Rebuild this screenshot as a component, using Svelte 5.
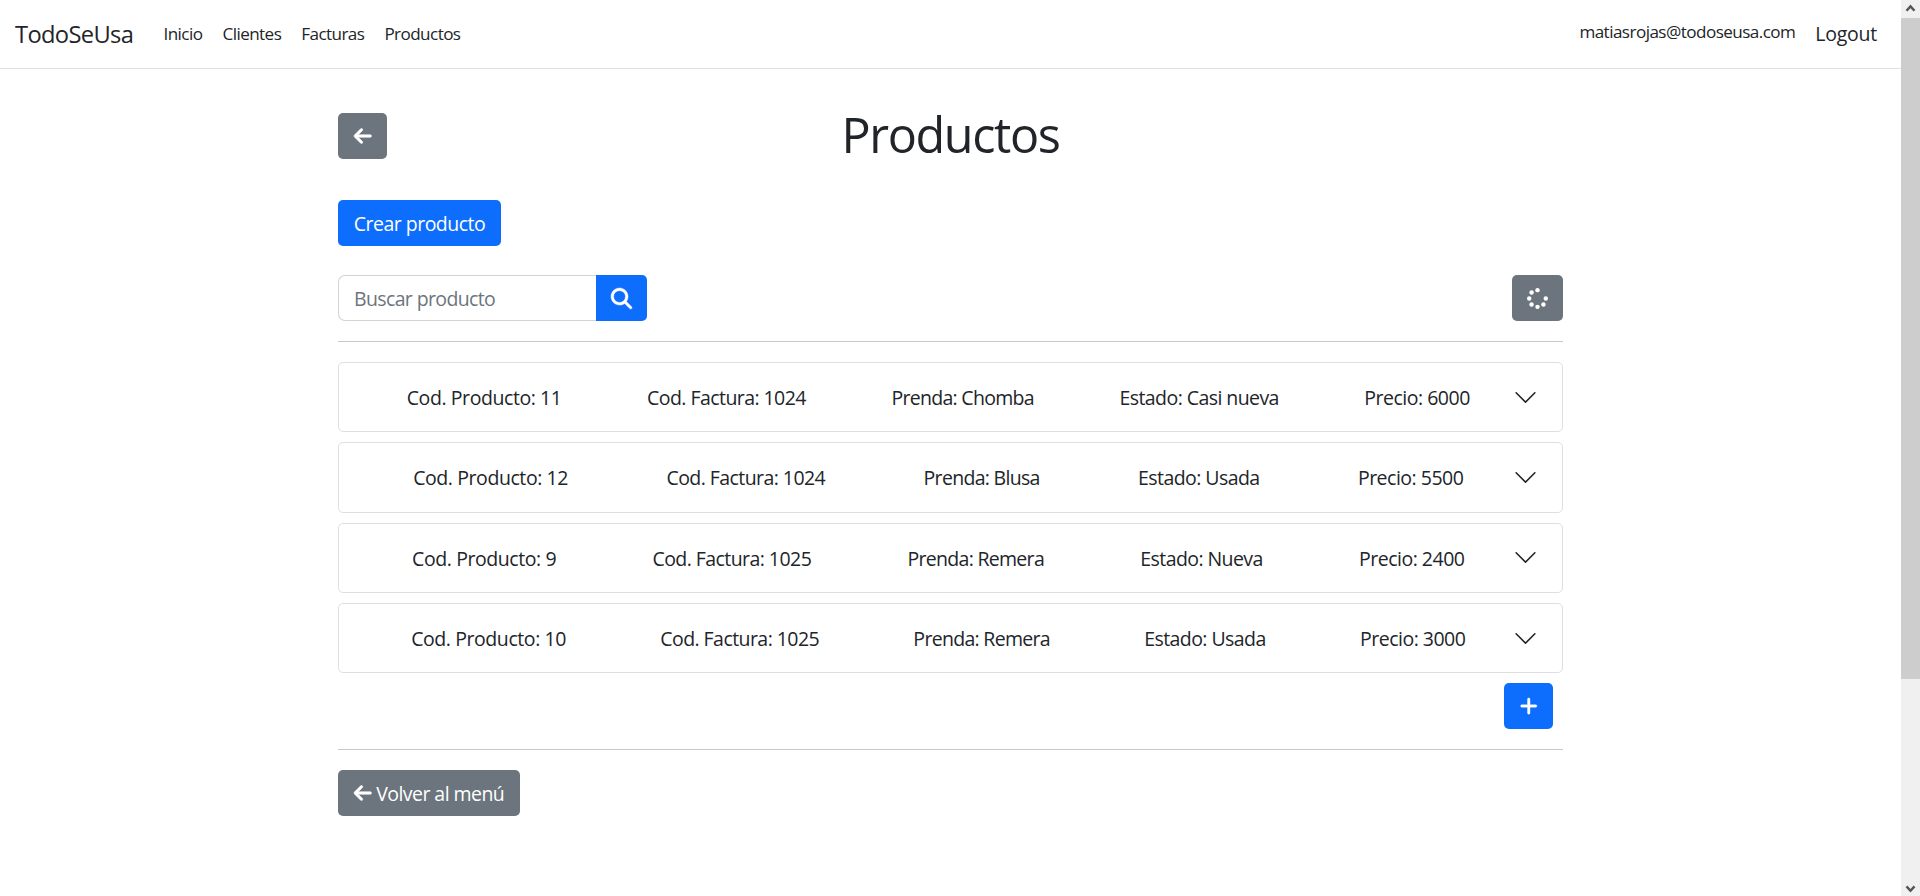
<script>
  const links = ['Inicio', 'Clientes', 'Facturas', 'Productos'];
  const products = [
    { code: 11, invoice: 1024, item: 'Chomba', state: 'Casi nueva', price: 6000 },
    { code: 12, invoice: 1024, item: 'Blusa', state: 'Usada', price: 5500 },
    { code: 9, invoice: 1025, item: 'Remera', state: 'Nueva', price: 2400 },
    { code: 10, invoice: 1025, item: 'Remera', state: 'Usada', price: 3000 }
  ];
</script>

{#snippet arrow()}
  <svg class="arrow" viewBox="0 0 448 512" fill="currentColor" stroke="currentColor" stroke-width="14"><path d="M9.4 233.4c-12.5 12.5-12.5 32.8 0 45.3l160 160c12.5 12.5 32.8 12.5 45.3 0s12.5-32.8 0-45.3L109.2 288 416 288c17.7 0 32-14.3 32-32s-14.3-32-32-32l-306.7 0L214.6 118.6c12.5-12.5 12.5-32.8 0-45.3s-32.8-12.5-45.3 0l-160 160z" /></svg>
{/snippet}

<div class="screen">
  <div class="page">
    <nav>
      <a class="brand" href="#top">TodoSeUsa</a>
      <div class="links">
        {#each links as link}<a href="#top">{link}</a>{/each}
      </div>
      <span class="email">matiasrojas@todoseusa.com</span>
      <a class="logout" href="#top">Logout</a>
    </nav>
    <main>
      <header>
        <button class="btn grey square" aria-label="Volver">{@render arrow()}</button>
        <h1>Productos</h1>
      </header>
      <button class="btn blue create"><span>Crear producto</span></button>
      <div class="tools">
        <div class="search">
          <input placeholder="Buscar producto" />
          <button class="btn blue find" aria-label="Buscar">
            <svg width="21" height="21" viewBox="0 0 512 512" fill="currentColor" stroke="currentColor" stroke-width="10"><path d="M416 208c0 45.9-14.9 88.3-40 122.7L502.6 457.4c12.5 12.5 12.5 32.8 0 45.3s-32.8 12.5-45.3 0L330.7 376c-34.4 25.2-76.8 40-122.7 40C93.1 416 0 322.9 0 208S93.1 0 208 0S416 93.1 416 208zM208 352a144 144 0 1 0 0-288 144 144 0 1 0 0 288z" /></svg>
          </button>
        </div>
        <button class="btn grey wide" aria-label="Recargar">
          <svg width="21" height="21" viewBox="0 0 512 512" fill="currentColor"><circle cx="256" cy="52" r="54" /><circle cx="256" cy="460" r="54" /><circle cx="54" cy="256" r="54" /><circle cx="458" cy="256" r="54" /><circle cx="111" cy="111" r="54" /><circle cx="111" cy="401" r="54" /><circle cx="401" cy="401" r="54" /></svg>
        </button>
      </div>
      <hr />
      <div class="list">
        {#each products as p}
          <div class="card">
            <div class="fields">
              <span class="prod">Cod. Producto: {p.code}</span>
              <span class="fact">Cod. Factura: {p.invoice}</span>
              <span class="item">Prenda: {p.item}</span>
              <span class="state">Estado: {p.state}</span>
              <span class="price">Precio: {p.price}</span>
            </div>
            <svg width="25" height="25" viewBox="0 0 16 16" fill="#212529"><path fill-rule="evenodd" d="M1.646 4.646a.5.5 0 0 1 .708 0L8 10.293l5.646-5.647a.5.5 0 0 1 .708.708l-6 6a.5.5 0 0 1-.708 0l-6-6a.5.5 0 0 1 0-.708z" /></svg>
          </div>
        {/each}
      </div>
      <div class="more">
        <button class="btn blue square" aria-label="Cargar más">
          <svg width="17.5" height="20" viewBox="0 0 448 512" fill="currentColor" stroke="currentColor" stroke-width="10"><path d="M256 80c0-17.7-14.3-32-32-32s-32 14.3-32 32V224H48c-17.7 0-32 14.3-32 32s14.3 32 32 32H192V432c0 17.7 14.3 32 32 32s32-14.3 32-32V288H400c17.7 0 32-14.3 32-32s-14.3-32-32-32H256V80z" /></svg>
        </button>
      </div>
      <hr />
      <button class="btn grey back">{@render arrow()}<span>Volver al menú</span></button>
    </main>
  </div>
  <div class="scrollbar">
    <svg width="19" height="18" viewBox="0 0 19 18" fill="none" stroke="#555" stroke-width="2.4"><path d="M5.5 10.8 9.5 6.4l4 4.4" /></svg>
    <div class="thumb"></div>
    <svg class="down" width="19" height="18" viewBox="0 0 19 18" fill="none" stroke="#555" stroke-width="2.4"><path d="M5.5 8.4 9.5 12.8l4-4.4" /></svg>
  </div>
</div>

<style>
  :global(body) { margin: 0; overflow: hidden; background: #fff; }
  * { box-sizing: border-box; }
  .screen {
    display: flex;
    height: 896px;
    color: #212529;
    font: 19.5px/30px "Open Sans", sans-serif;
  }
  .page { flex: 1; }
  a { color: inherit; text-decoration: none; }
  span { white-space: nowrap; }
  svg { overflow: visible; }
  nav {
    display: flex;
    align-items: center;
    height: 69px;
    padding: 0 24px 0 15px;
    border-bottom: 1px solid #dee2e6;
  }
  .brand { width: 148.5px; font-size: 23.7px; letter-spacing: -0.65px; }
  .links { display: flex; flex: 1; gap: 20px; font-size: 17.1px; letter-spacing: -0.57px; }
  .email { margin: 0 20px 4px 0; font-size: 17.1px; letter-spacing: -0.55px; }
  .logout { letter-spacing: -0.25px; }
  main { width: 1225px; margin: 0 auto; }
  header {
    display: grid;
    grid-template-columns: 49px 1fr 49px;
    height: 46px;
    margin-top: 44px;
  }
  h1 {
    height: 60px;
    margin: -9px 0 0;
    font-weight: 400;
    font-size: 48.5px;
    line-height: 60px;
    text-align: center;
    letter-spacing: -1.4px;
  }
  .btn {
    display: flex;
    align-items: center;
    justify-content: center;
    height: 46px;
    padding: 0;
    border: 0;
    border-radius: 5px;
    color: #fff;
    font: inherit;
  }
  .btn span { padding-top: 2px; }
  .grey { background: #6c757d; }
  .blue { background: #0d6efd; }
  .square { width: 49px; }
  .wide { width: 51px; }
  .arrow { width: 17.5px; height: 20px; }
  .create { width: 163px; margin-top: 41px; letter-spacing: -0.52px; }
  .tools { display: flex; justify-content: space-between; margin-top: 29px; }
  .search { display: flex; }
  input {
    width: 258px;
    height: 46px;
    padding: 1px 15px 0;
    border: 1px solid #ced4da;
    border-right: 0;
    border-radius: 7px 0 0 7px;
    font: inherit;
    letter-spacing: -0.63px;
  }
  input::placeholder { color: #6c757d; opacity: 1; }
  .find { width: 51px; border-radius: 0 5px 5px 0; }
  hr { height: 1px; margin: 20px 0; border: 0; background: #c7c8ca; }
  .list { display: flex; flex-direction: column; gap: 10px; }
  .card {
    display: flex;
    align-items: center;
    height: 70.33px;
    padding: 0 24.4px 0 25px;
    border: 1px solid #dfdfdf;
    border-radius: 5px;
  }
  .fields { display: flex; flex: 1; justify-content: space-around; padding-top: 2px; letter-spacing: -0.5px; }
  .prod { letter-spacing: -0.42px; }
  .fact { letter-spacing: -0.56px; }
  .item { letter-spacing: -0.7px; }
  .state { letter-spacing: -0.57px; }
  .more { display: flex; justify-content: flex-end; margin-top: 10px; padding-right: 10px; }
  .back { width: 182px; gap: 5px; letter-spacing: -0.55px; }
  .scrollbar { display: flex; flex-direction: column; width: 19px; background: #f0f0f0; }
  .thumb { height: 661px; background: #cdcdcd; }
  .down { margin-top: auto; }
</style>
